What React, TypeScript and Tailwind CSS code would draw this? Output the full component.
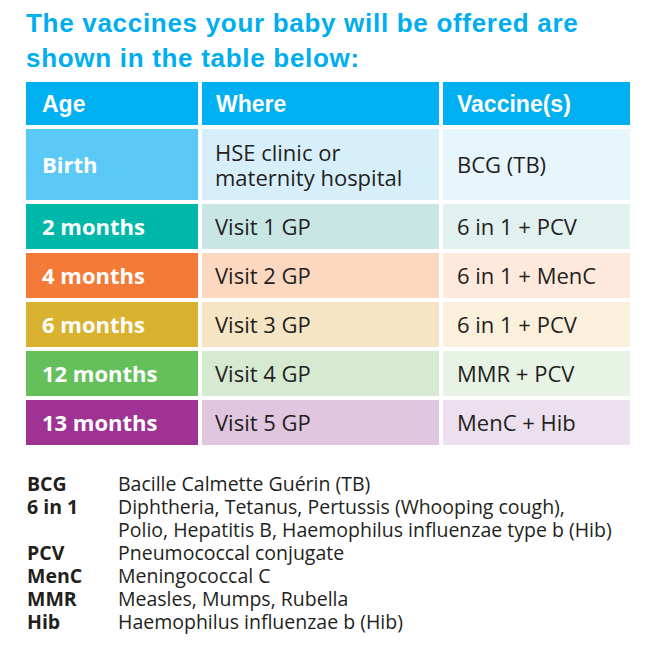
const rows = [
  { age: "Birth", where: ["HSE clinic or", "maternity hospital"], vaccine: "BCG (TB)", c1: "bg-[#5bc9f5]", c2: "bg-[#d7effa]", c3: "bg-[#e7f5fc]", tall: true },
  { age: "2 months", where: ["Visit 1 GP"], vaccine: "6 in 1 + PCV", c1: "bg-[#00b8a9]", c2: "bg-[#c8e6e4]", c3: "bg-[#e0f1ef]" },
  { age: "4 months", where: ["Visit 2 GP"], vaccine: "6 in 1 + MenC", c1: "bg-[#f47b37]", c2: "bg-[#fdd8c0]", c3: "bg-[#fee9dc]" },
  { age: "6 months", where: ["Visit 3 GP"], vaccine: "6 in 1 + PCV", c1: "bg-[#d9b22f]", c2: "bg-[#f5e5c4]", c3: "bg-[#faf0dc]" },
  { age: "12 months", where: ["Visit 4 GP"], vaccine: "MMR + PCV", c1: "bg-[#65bf5b]", c2: "bg-[#d6ead2]", c3: "bg-[#e7f3e4]" },
  { age: "13 months", where: ["Visit 5 GP"], vaccine: "MenC + Hib", c1: "bg-[#9f3393]", c2: "bg-[#e1c6df]", c3: "bg-[#ede0ee]" },
];

const legend = [
  { abbr: "BCG", text: ["Bacille Calmette Guérin (TB)"] },
  { abbr: "6 in 1", text: ["Diphtheria, Tetanus, Pertussis (Whooping cough),", "Polio, Hepatitis B, Haemophilus influenzae type b (Hib)"] },
  { abbr: "PCV", text: ["Pneumococcal conjugate"] },
  { abbr: "MenC", text: ["Meningococcal C"] },
  { abbr: "MMR", text: ["Measles, Mumps, Rubella"] },
  { abbr: "Hib", text: ["Haemophilus influenzae b (Hib)"] },
];

export default function App() {
  return (
    <div className="w-[653px] h-[665px] bg-white pl-[26px] pt-[6px] text-[#231f20]">
      {/* Heading */}
      <h1 className="font-['Liberation_Sans',Arial,sans-serif] font-bold text-[26px] leading-[35px] tracking-[0.7px] text-[#00aeef]">
        The vaccines your baby will be offered are
        <br />
        shown in the table below:
      </h1>

      {/* Schedule table */}
      <div className="mt-[6px] grid grid-cols-[172px_237px_187px] gap-[4px] w-[604px]">
        <div className="h-[43px] bg-[#00b0f0] flex items-center pl-[16px] pt-[2px] font-['Liberation_Sans',Arial,sans-serif] font-bold text-[23px] text-white">
          Age
        </div>
        <div className="h-[43px] bg-[#00b0f0] flex items-center pl-[14px] pt-[2px] font-['Liberation_Sans',Arial,sans-serif] font-bold text-[23px] text-white">
          Where
        </div>
        <div className="h-[43px] bg-[#00b0f0] flex items-center pl-[14px] pt-[2px] font-['Liberation_Sans',Arial,sans-serif] font-bold text-[23px] text-white">
          Vaccine(s)
        </div>

        {rows.map((r) => (
          <div key={r.age} className="contents">
            <div
              className={`${r.c1} ${r.tall ? "h-[71px]" : "h-[45px]"} flex items-center pl-[16px] font-['Open_Sans',sans-serif] font-bold text-[22px] text-white`}
            >
              {r.age}
            </div>
            <div
              className={`${r.c2} flex flex-col justify-center pl-[13px] font-['Open_Sans',sans-serif] text-[22px] leading-[25px]`}
            >
              {r.where.map((w) => (
                <span key={w}>{w}</span>
              ))}
            </div>
            <div className={`${r.c3} flex items-center pl-[14px] font-['Open_Sans',sans-serif] text-[22px]`}>
              {r.vaccine}
            </div>
          </div>
        ))}
      </div>

      {/* Abbreviations */}
      <div className="mt-[27px] pl-[1px] grid grid-cols-[91px_1fr] font-['Open_Sans',sans-serif] text-[19.5px] leading-[23px]">
        {legend.map((l) => (
          <div key={l.abbr} className="contents">
            <div className="font-bold">{l.abbr}</div>
            <div>
              {l.text.map((t) => (
                <div key={t}>{t}</div>
              ))}
            </div>
          </div>
        ))}
      </div>
    </div>
  );
}
